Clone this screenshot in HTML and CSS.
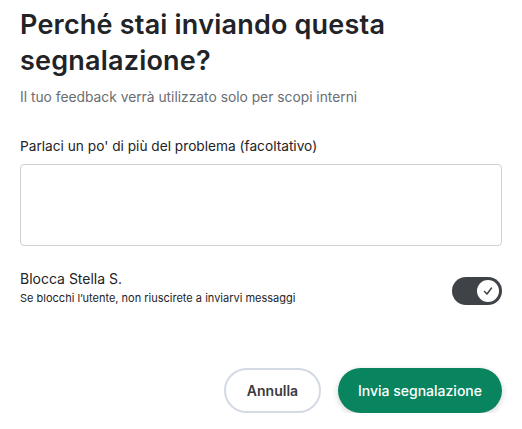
FILE: index.html
```html
<!DOCTYPE html>
<html lang="it">
<head>
<meta charset="utf-8">
<link rel="stylesheet" href="styles.css">
</head>
<body>
<div class="dialog">
  <h1 class="title">Perché stai inviando questa segnalazione?</h1>
  <p class="subtitle">Il tuo feedback verrà utilizzato solo per scopi interni</p>
  <label class="label" for="details">Parlaci un po' di più del problema (facoltativo)</label>
  <textarea id="details" class="textarea"></textarea>
  <div class="block-row">
    <div class="block-text">
      <div class="block-title">Blocca Stella S.</div>
      <div class="block-sub">Se blocchi l’utente, non riuscirete a inviarvi messaggi</div>
    </div>
    <div class="toggle">
      <div class="knob">
        <svg width="12" height="12" viewBox="0 0 12 12"><path d="M2.5 6.5 L5 9 L9.5 3" fill="none" stroke="#3f4246" stroke-width="1.5" stroke-linecap="round" stroke-linejoin="round"/></svg>
      </div>
    </div>
  </div>
  <div class="actions">
    <button class="btn btn-cancel">Annulla</button>
    <button class="btn btn-primary">Invia segnalazione</button>
  </div>
</div>
</body>
</html>
```
FILE: styles.css
```css
* { box-sizing: border-box; }
html, body { margin: 0; background: #fff; }
body { font-family: Inter, Lato, sans-serif; color: #222326; }
.dialog { padding: 7px 20px 0 20px; display: flex; flex-direction: column; }
.title { margin: 0; font-size: 27px; line-height: 36px; font-weight: 600; color: #222326; width: 420px; letter-spacing: 0.2px; }
.subtitle { margin: 9px 0 0 0; font-size: 13.8px; line-height: 18px; color: #6a6d72; }
.label { margin-top: 31px; font-size: 13.7px; line-height: 18px; color: #222326; }
.textarea { margin-top: 9px; width: 482px; height: 82px; border: 1px solid #cdd2d9; border-radius: 4px; resize: none; display: block; font: inherit; }
.block-row { margin-top: 24px; display: flex; align-items: center; justify-content: space-between; }
.block-title { font-size: 14px; line-height: 18px; }
.block-sub { font-size: 11px; line-height: 16px; margin-top: 2px; color: #222326; }
.toggle { margin-top: 6px; width: 50px; height: 28px; border-radius: 14px; background: #3f4246; display: flex; align-items: center; justify-content: flex-end; padding-right: 3px; }
.knob { width: 22px; height: 22px; border-radius: 50%; background: #fff; display: flex; align-items: center; justify-content: center; }
.actions { margin-top: 62px; display: flex; justify-content: flex-end; gap: 17px; }
.btn { font-family: Inter, Lato, sans-serif; font-size: 14px; font-weight: 600; height: 45px; border-radius: 23px; cursor: pointer; }
.btn-cancel { width: 97px; background: #fff; border: 2px solid #d3dae3; color: #3a3b3f; }
.btn-primary { width: 164px; background: #08855f; border: none; color: #fff; font-weight: 500; box-shadow: 0 2px 6px rgba(0,0,0,0.18); }
```
